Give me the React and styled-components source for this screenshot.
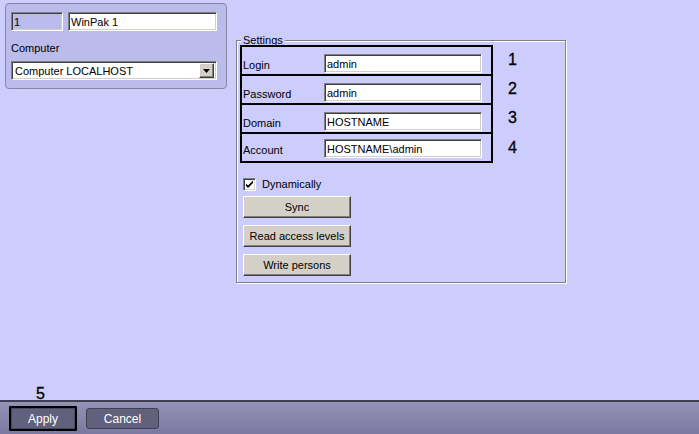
import React from 'react';
import styled, { createGlobalStyle } from 'styled-components';

const GlobalStyle = createGlobalStyle`
  html, body {
    margin: 0;
    padding: 0;
    background: #cccdfd;
  }
  body {
    font-family: "Liberation Sans", Arial, sans-serif;
    font-size: 11px;
    color: #000;
  }
`;

const rows = [
  { label: 'Login', value: 'admin', num: '1' },
  { label: 'Password', value: 'admin', num: '2' },
  { label: 'Domain', value: 'HOSTNAME', num: '3' },
  { label: 'Account', value: 'HOSTNAME\\admin', num: '4' },
];

const App = () => {
  return (
    <Screen>
      <GlobalStyle />
      <Main>
        <Panel>
          <IdRow>
            <Field $width={52} $muted value="1" readOnly />
            <Field $width={149} value="WinPak 1" readOnly />
          </IdRow>
          <PanelLabel>Computer</PanelLabel>
          <Select>
            <span>Computer LOCALHOST</span>
            <DropButton>
              <svg width="7" height="4" viewBox="0 0 7 4">
                <path d="M0 0h7L3.5 4z" fill="#000" />
              </svg>
            </DropButton>
          </Select>
        </Panel>

        <Settings>
          <Legend>Settings</Legend>
          <Group>
            {rows.map((r, i) => (
              <Line key={r.label}>
                <BoxRow $last={i === rows.length - 1}>
                  <RowLabel>{r.label}</RowLabel>
                  <Field $width={158} value={r.value} readOnly />
                </BoxRow>
                <Num>{r.num}</Num>
              </Line>
            ))}
          </Group>

          <CheckLine>
            <CheckBox>
              <svg width="9" height="9" viewBox="0 0 9 9">
                <path d="M1 3.5l2 2 5-5v2.5L3 8 1 6z" fill="#000" />
              </svg>
            </CheckBox>
            <span>Dynamically</span>
          </CheckLine>

          <Buttons>
            <Button>Sync</Button>
            <Button>Read access levels</Button>
            <Button>Write persons</Button>
          </Buttons>
        </Settings>
      </Main>

      <Bar>
        <Marker>5</Marker>
        <BarButton $default>Apply</BarButton>
        <BarButton>Cancel</BarButton>
      </Bar>
    </Screen>
  );
};

export default App;

const Screen = styled.div`
  width: 699px;
  height: 434px;
  display: flex;
  flex-direction: column;
  overflow: hidden;
`;

const Main = styled.div`
  flex: 1;
  display: flex;
  align-items: flex-start;
  padding: 3px 0 0 5px;
`;

const Panel = styled.div`
  box-sizing: border-box;
  width: 222px;
  height: 86px;
  border: 1px solid #8585a6;
  border-radius: 4px;
  background: #bbbbec;
  padding: 8px 8px 0 5px;
  display: flex;
  flex-direction: column;
`;

const IdRow = styled.div`
  display: flex;
  gap: 5px;
`;

const Field = styled.input`
  box-sizing: border-box;
  width: ${(p) => p.$width}px;
  height: 19px;
  margin: 0;
  padding: 0 2px;
  font-family: inherit;
  font-size: 11px;
  color: #000;
  background: ${(p) => (p.$muted ? '#bbbbec' : '#fff')};
  border: 1px solid;
  border-color: #808080 #ffffff #ffffff #808080;
  box-shadow: inset 1px 1px 0 #404040, inset -1px -1px 0 #d4d0c8;
  outline: none;
`;

const PanelLabel = styled.div`
  margin-top: 11px;
  line-height: 13px;
`;

const Select = styled.div`
  box-sizing: border-box;
  margin-top: 6px;
  width: 206px;
  height: 19px;
  display: flex;
  align-items: center;
  justify-content: space-between;
  padding: 0 2px 0 3px;
  background: #fff;
  border: 1px solid;
  border-color: #808080 #ffffff #ffffff #808080;
  box-shadow: inset 1px 1px 0 #404040, inset -1px -1px 0 #d4d0c8;
`;

const DropButton = styled.div`
  box-sizing: border-box;
  width: 15px;
  height: 15px;
  display: flex;
  align-items: center;
  justify-content: center;
  background: #d4d0c8;
  border: 1px solid;
  border-color: #ffffff #404040 #404040 #ffffff;
  box-shadow: inset -1px -1px 0 #808080;
`;

const Settings = styled.fieldset`
  box-sizing: border-box;
  width: 330px;
  height: 248px;
  margin: 32px 0 0 9px;
  padding: 0 3px 0 3px;
  border: 1px solid #808080;
  box-shadow: inset 1px 1px 0 #fff, 1px 1px 0 #fff;
  min-width: 0;
`;

const Legend = styled.legend`
  margin-left: 1px;
  padding: 0 2px;
  line-height: 10px;
  background: #cccdfd;
`;

const Group = styled.div`
  display: flex;
  flex-direction: column;
`;

const Line = styled.div`
  display: flex;
  align-items: center;
`;

const BoxRow = styled.div`
  box-sizing: border-box;
  width: 253px;
  height: ${(p) => (p.$last ? 31 : 29)}px;
  display: flex;
  align-items: flex-end;
  padding: 0 0 ${(p) => (p.$last ? 3 : 1)}px 1px;
  border: 2px solid #000;
  border-bottom-width: ${(p) => (p.$last ? 2 : 0)}px;
`;

const RowLabel = styled.div`
  width: 81px;
  line-height: 13px;
  padding-bottom: 1px;
`;

const Num = styled.div`
  margin-left: 15px;
  font-size: 16px;
  line-height: 16px;
  -webkit-text-stroke: 0.3px #000;
`;

const CheckLine = styled.div`
  display: flex;
  align-items: center;
  gap: 6px;
  margin: 15px 0 0 3px;
  line-height: 13px;
`;

const CheckBox = styled.div`
  box-sizing: border-box;
  width: 13px;
  height: 13px;
  display: flex;
  align-items: center;
  justify-content: center;
  background: #fff;
  border: 1px solid;
  border-color: #808080 #ffffff #ffffff #808080;
  box-shadow: inset 1px 1px 0 #404040, inset -1px -1px 0 #d4d0c8;
`;

const Buttons = styled.div`
  display: flex;
  flex-direction: column;
  gap: 7px;
  margin: 5px 0 0 3px;
`;

const Button = styled.button`
  box-sizing: border-box;
  width: 108px;
  height: 22px;
  margin: 0;
  padding: 0;
  font-family: inherit;
  font-size: 11px;
  color: #000;
  background: #d4d0c8;
  border: 1px solid;
  border-color: #ffffff #404040 #404040 #ffffff;
  box-shadow: inset -1px -1px 0 #808080;
`;

const Bar = styled.div`
  position: relative;
  box-sizing: border-box;
  height: 34px;
  display: flex;
  align-items: center;
  gap: 9px;
  padding: 1px 0 0 9px;
  border-top: 2px solid #3f3e52;
  background: linear-gradient(#9492b5, #7b79a0);
`;

const Marker = styled.div`
  position: absolute;
  left: 36px;
  top: -16px;
  font-size: 16px;
  line-height: 16px;
  color: #000;
  -webkit-text-stroke: 0.3px #000;
`;

const BarButton = styled.button`
  box-sizing: border-box;
  width: ${(p) => (p.$default ? 68 : 73)}px;
  height: ${(p) => (p.$default ? 25 : 21)}px;
  margin: 0;
  padding: 0;
  font-family: inherit;
  font-size: 12px;
  color: #fff;
  background: #62617d;
  border: ${(p) => (p.$default ? '2px solid #000' : '1px solid #403f56')};
  border-radius: ${(p) => (p.$default ? 1 : 3)}px;
  box-shadow: ${(p) => (p.$default ? 'inset 0 0 0 1px #4a4960' : 'none')};
`;
